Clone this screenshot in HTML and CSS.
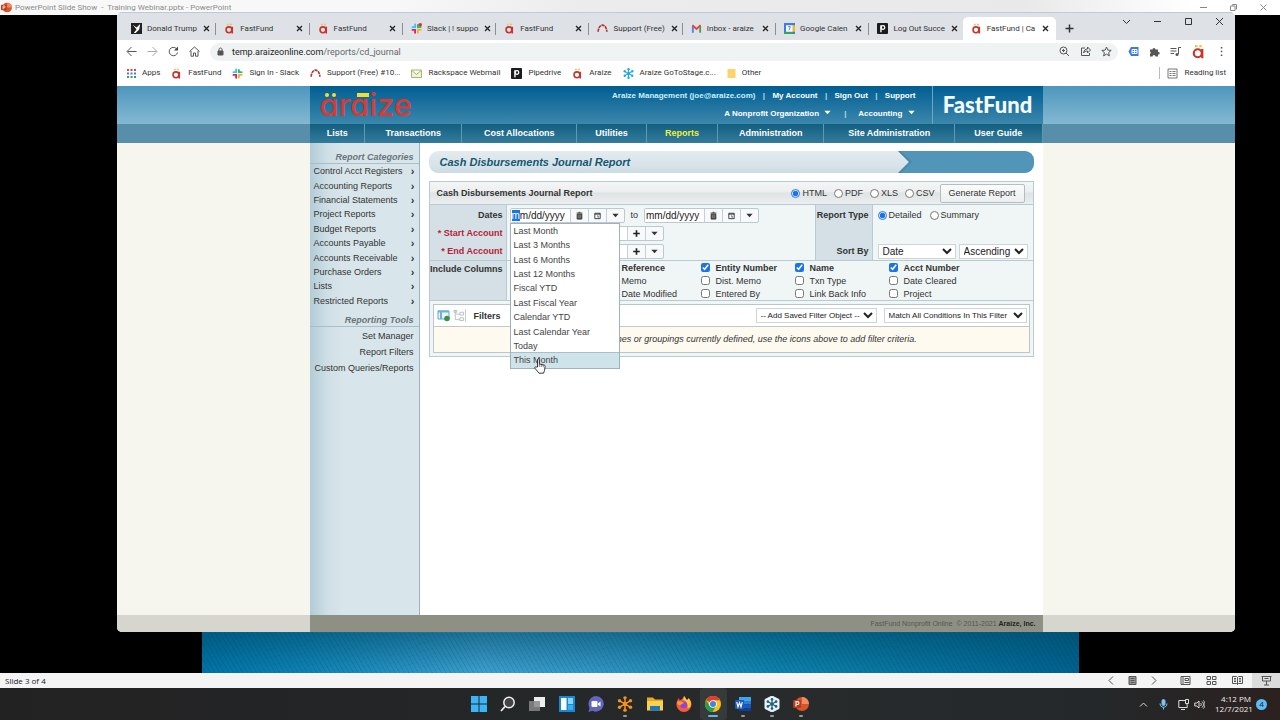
FILE: index.html
```html
<!DOCTYPE html>
<html lang="en">
<head>
<meta charset="utf-8">
<title>FastFund | Cash Disbursements Journal Report</title>
<link rel="stylesheet" href="styles.css">
</head>
<body>
<svg class="defs" aria-hidden="true">
  <symbol id="a-logo" viewBox="0 0 12 12"><circle cx="5.4" cy="7.4" r="3.2" fill="none" stroke="#c8332d" stroke-width="1.7"/><path d="M9 4v7.4" stroke="#c8332d" stroke-width="1.8"/><path d="M3.2 1.6h2M6.6 1.6h2" stroke="#f1c34d" stroke-width="1.8"/></symbol>
  <symbol id="slack" viewBox="0 0 12 12"><g fill="none" stroke-width="2" stroke-linecap="round"><path d="M4.5 1.6v3M1.6 4.5h1.6" stroke="#36c5f0"/><path d="M7.5 2v2.6M8.6 4.5h1.9" stroke="#2eb67d"/><path d="M7.5 7.5h3M7.5 9v1.4" stroke="#ecb22e"/><path d="M1.6 7.5h3M4.5 8.6v2" stroke="#e01e5a"/></g></symbol>
  <symbol id="arch" viewBox="0 0 12 12"><path d="M1.2 9.5C2 0 10 0 10.8 9.5" fill="none" stroke="#b8322f" stroke-width="1.8" stroke-dasharray="3.4 .7"/></symbol>
  <symbol id="pipe" viewBox="0 0 12 12"><rect width="12" height="12" rx="1" fill="#1b1c1e"/><circle cx="6.5" cy="4.8" r="2" fill="none" stroke="#fff" stroke-width="1.4"/><path d="M4.3 2.4v7.8" stroke="#fff" stroke-width="1.5"/></symbol>
  <symbol id="flake" viewBox="0 0 12 12"><g stroke="currentColor" fill="currentColor"><path d="M6 1v10M1.7 3.5l8.6 5M1.7 8.5l8.6-5" stroke-width="1.1"/><g stroke="none"><circle cx="6" cy="1.4" r="1.3"/><circle cx="6" cy="10.6" r="1.3"/><circle cx="1.9" cy="3.6" r="1.3"/><circle cx="10.1" cy="3.6" r="1.3"/><circle cx="1.9" cy="8.4" r="1.3"/><circle cx="10.1" cy="8.4" r="1.3"/><circle cx="6" cy="6" r="1.7"/></g></g></symbol>
  <symbol id="ppt" viewBox="0 0 16 16"><g stroke="none"><circle cx="9" cy="8" r="7" fill="#d9532c"/><path d="M9 1a7 7 0 0 1 7 7H9z" fill="#f08a63"/><rect y="4" width="8" height="8" rx="1" fill="#b93a19"/></g><path d="M3 10.500V5.600h1.500a1.400 1.400 0 0 1 0 2.900H3" fill="none" stroke="#fff" stroke-width="1.100"/></symbol>
  <symbol id="trash" viewBox="0 0 10 10"><path d="M2.400 3.500h5.200v5.500H2.400zM1.800 2.300h6.400M4 1.500h2" fill="#555" stroke="#333" stroke-width="1"/><path d="M4.200 4.500v3.500M5.800 4.500v3.500" stroke="#aaa" stroke-width=".5"/></symbol>
  <symbol id="cal" viewBox="0 0 10 10"><path d="M2 2.500h6v6H2zM2 3.500h6" fill="none" stroke="#333" stroke-width="1"/><path d="M4.500 5.500h1.200v2" fill="none" stroke="#333" stroke-width=".8"/></symbol>
  <symbol id="down" viewBox="0 0 10 10"><path d="M1.500 3h7L5 7z" fill="currentColor"/></symbol>
  <symbol id="plus" viewBox="0 0 10 10"><path d="M5 2v6M2 5h6" stroke="#222" stroke-width="1.500"/></symbol>
</svg>

<div class="desktop">
  <header class="ppt-title">
    <svg class="i11"><use href="#ppt"/></svg>
    <span>PowerPoint Slide Show &nbsp;-&nbsp; Training Webinar.pptx - PowerPoint</span>
    <div class="ppt-controls">
      <svg class="i9" viewBox="0 0 9 9"><path d="M1 4.500h7"/></svg>
      <svg class="i9" viewBox="0 0 9 9"><path d="M1.500 3h4.500v4.500h-4.500zM3.500 2.500v-1h4v4.500H6.500"/></svg>
      <svg class="i9" viewBox="0 0 9 9"><path d="M1.500 1.500l6 6M7.500 1.500l-6 6"/></svg>
    </div>
  </header>
  <div class="stage"><div class="slide"></div></div>
  <footer class="ppt-status">
    <span>Slide 3 of 4</span>
    <div class="views">
      <svg class="i11" viewBox="0 0 11 11"><path d="M7 1.500l-4 4 4 4"/></svg>
      <svg class="i11" viewBox="0 0 11 11"><path d="M2 1.500h7v8H2z" fill="#999"/><path d="M3.500 3.500h4M3.500 5.500h4M3.500 7.500h4"/></svg>
      <svg class="i11" viewBox="0 0 11 11"><path d="M4 1.500l4 4-4 4"/></svg>
      <svg class="i11 gap" viewBox="0 0 11 11"><path d="M1 1.500h9v8H1zM3 1.500v8M5 3.500h3.500v2H5zM4.500 7.500h5"/></svg>
      <svg class="i11" viewBox="0 0 11 11"><path d="M1 1.500h3.500v3H1zM6.500 1.500H10v3H6.500zM1 6.500h3.500v3H1zM6.500 6.500H10v3H6.500z"/></svg>
      <svg class="i11" viewBox="0 0 11 11"><path d="M.5 1.500h4l1 1 1-1h4v7h-4l-1 1-1-1h-4zM5.500 2.500v7M2 3.500h2M2 5h2M2 6.500h2M7 3.500h2M7 5h2M7 6.500h2"/></svg>
      <span class="current"><svg class="i11" viewBox="0 0 11 11"><path d="M.5 1.500h10M1.500 1.500v4.500h8v-4.500M5.500 6v4M3 10h5M3.500 3.500h4"/></svg></span>
    </div>
  </footer>
  <div class="taskbar">
    <nav class="apps" aria-label="Apps">
      <button aria-label="Start"><svg viewBox="0 0 16 16"><path d="M0 0h7.500v7.500H0zM8.500 0H16v7.500H8.500zM0 8.500h7.500V16H0zM8.500 8.500H16V16H8.500z" fill="#3bb5f5"/></svg></button>
      <button aria-label="Search"><svg viewBox="0 0 16 16"><circle cx="9" cy="6.500" r="5.200" fill="#444" stroke="#eee" stroke-width="1.500"/><path d="M5 10.500L1 15" stroke="#eee" stroke-width="1.800"/></svg></button>
      <button aria-label="Task view"><svg viewBox="0 0 16 16"><path d="M5 1h11v10H5z" fill="#eee"/><path d="M0 5h11v10H0z" fill="#888" opacity=".85"/></svg></button>
      <button aria-label="Widgets"><svg viewBox="0 0 16 16"><path d="M0 0h16v16H0z" fill="#1688d8"/><path d="M2 2h5.500v12H2z" fill="#fff"/><path d="M9 2h5v6H9z" fill="#8bd3fb"/><path d="M9 9h5v5H9z" fill="#3face9"/></svg></button>
      <button aria-label="Chat"><svg viewBox="0 0 16 16"><path d="M8 0a7.800 7.800 0 1 1-3.500 14.800L.5 16l1-4A8 8 0 0 1 8 0z" fill="#6664bd"/><rect x="3.500" y="5" width="6" height="6" rx="1" fill="#fff"/><path d="M10 7.500l2.500-2v5L10 8.800z" fill="#fff"/></svg></button>
      <button aria-label="GoTo" class="open orange"><svg><use href="#flake"/></svg></button>
      <button aria-label="File Explorer"><svg viewBox="0 0 16 16"><path d="M0 1.500h6l2 2h8V14H0z" fill="#e9a91f"/><path d="M0 5h16v9.500H0z" fill="#fcd04f"/><path d="M3 14.500V10h10v4.500H3z" fill="#1d79bd"/></svg></button>
      <button aria-label="Firefox"><svg viewBox="0 0 16 16"><path d="M8 0c2 2 1.500 3 3 4 1-.500 1.500-1.500 1.500-2 2 2 3 4 3 6.500A7.600 7.600 0 0 1 8 16 7.600 7.600 0 0 1 .4 8.500C.4 6 1.500 3.500 3 2l.5 2.500C5.500 4 7.500 2 8 0z" fill="#f9583a"/><path d="M8 0c2 2 1.500 3 3 4 1-.500 1.500-1.500 1.500-2 2 2 3 5 2 8-1 2-2 2-3 2 1-4-1-7-4.500-8C7.500 3 8 1 8 0z" fill="#fec939"/><circle cx="7.500" cy="8.800" r="3.500" fill="#8c45e0"/><path d="M1 6c3-2 5 0 7 .5-1 2-3 1-3.500 3C2 9 1 8 1 6z" fill="#ff9a2e"/></svg></button>
      <button aria-label="Chrome" class="open active"><svg viewBox="0 0 16 16"><circle cx="8" cy="8" r="8" fill="#fbc116"/><path d="M8 8L1.100 4A8 8 0 0 1 15 4.200H8z" fill="#e33b2e"/><path d="M1.100 4A8 8 0 0 0 7.500 16L11 10 8 8 4.500 9.800z" fill="#2a9d4a"/><circle cx="8" cy="8" r="3.800" fill="#fff"/><circle cx="8" cy="8" r="3" fill="#3f82ee"/></svg></button>
      <button aria-label="Word" class="open"><svg viewBox="0 0 16 16"><path d="M4 1h12v4H4z" fill="#41a5ee"/><path d="M4 5h12v3.500H4z" fill="#2b7cd3"/><path d="M4 8.500h12V12H4z" fill="#185abd"/><path d="M4 12h12v3H4z" fill="#103f91"/><rect y="4" width="9" height="9" rx="1" fill="#185abd"/><path d="M1.700 6l1.300 5 1.500-4.500L6 11l1.300-5" fill="none" stroke="#fff" stroke-width="1.100"/></svg></button>
      <button aria-label="GoToStage" class="open hex"><svg viewBox="0 0 16 16"><path d="M8 0l7 3.500v9L8 16l-7-3.500v-9z" fill="#e7f4fa" stroke="#e7f4fa"/><use href="#flake" x="2" y="2" width="12" height="12"/></svg></button>
      <button aria-label="PowerPoint" class="open"><svg><use href="#ppt"/></svg></button>
    </nav>
    <div class="tray">
      <svg class="i11" viewBox="0 0 11 11"><path d="M2 7.500L5.500 4 9 7.500"/></svg>
      <svg class="i11 mic" viewBox="0 0 11 11"><rect x="4" y=".5" width="3" height="6" rx="1.500" fill="#7fc4ee"/><path d="M2 4.500c0 5 7 5 7 0M5.500 8.500v2"/></svg>
      <svg class="i11" viewBox="0 0 11 11"><path d="M7 1.500H.8v7h8.400V6M3 10.500h4M7.500.5h3v4h-3zM9 4.500v1.500"/></svg>
      <svg class="i11 near" viewBox="0 0 11 11"><path d="M.8 4h2L5 2v7L2.800 7h-2zM6.500 4c1 1 1 2 0 3M8 2.500c2 2 2 4 0 6M9.500 1.500c2 2.500 2 5.500 0 8"/></svg>
      <div class="clock"><div>4:12 PM</div><div>12/7/2021</div></div>
      <span class="badge">4</span>
    </div>
  </div>

  <section class="browser">
    <div class="tabstrip">
      <div class="tabs" role="tablist">
        <div class="tab"><svg class="i11" viewBox="0 0 12 12"><path d="M0 0h12v12H0z" fill="#222"/><path d="M2 2l4 3 4-4-1 6-4 4H3l3-4z" fill="#fff"/></svg><span>Donald Trump</span><button aria-label="Close"><svg class="i9"><use href="#x"/></svg></button></div>
        <div class="tab"><svg class="i11"><use href="#a-logo"/></svg><span>FastFund</span><button aria-label="Close"><svg class="i9"><use href="#x"/></svg></button></div>
        <div class="tab"><svg class="i11"><use href="#a-logo"/></svg><span>FastFund</span><button aria-label="Close"><svg class="i9"><use href="#x"/></svg></button></div>
        <div class="tab"><svg class="i11" viewBox="0 0 12 12"><use href="#slack" width="12" height="12"/><circle cx="10" cy="2" r="2" fill="#d8322a"/></svg><span>Slack | ! suppo</span><button aria-label="Close"><svg class="i9"><use href="#x"/></svg></button></div>
        <div class="tab"><svg class="i11"><use href="#a-logo"/></svg><span>FastFund</span><button aria-label="Close"><svg class="i9"><use href="#x"/></svg></button></div>
        <div class="tab"><svg class="i11"><use href="#arch"/></svg><span>Support (Free)</span><button aria-label="Close"><svg class="i9"><use href="#x"/></svg></button></div>
        <div class="tab"><svg class="i11" viewBox="0 0 12 12"><g fill="none" stroke-width="2"><path d="M2 10.500V3" stroke="#4285f4"/><path d="M10 10.500V3" stroke="#34a853"/><path d="M1.500 2.500L6 6.500l4.500-4" stroke="#ea4335"/></g></svg><span>Inbox - araize</span><button aria-label="Close"><svg class="i9"><use href="#x"/></svg></button></div>
        <div class="tab"><svg class="i11" viewBox="0 0 12 12"><path d="M0 0h12v12H0z" fill="#3d7de8"/><path d="M9.500 2.500H12V9.500H9.500z" fill="#fbbc04"/><path d="M0 9.500h9.500V12H0z" fill="#34a853"/><path d="M2.200 2.500h7.300v7H2.200z" fill="#fff"/><path d="M4.500 4h2.500L5.500 8" fill="none" stroke="#3d7de8"/></svg><span>Google Calen</span><button aria-label="Close"><svg class="i9"><use href="#x"/></svg></button></div>
        <div class="tab"><svg class="i11"><use href="#pipe"/></svg><span>Log Out Succe</span><button aria-label="Close"><svg class="i9"><use href="#x"/></svg></button></div>
        <div class="tab selected"><svg class="i11"><use href="#a-logo"/></svg><span>FastFund | Ca</span><button aria-label="Close"><svg class="i9"><use href="#x"/></svg></button></div>
      </div>
      <button class="new-tab" aria-label="New tab"><svg class="i11" viewBox="0 0 11 11"><path d="M5.500 1.500v8M1.500 5.500h8"/></svg></button>
      <div class="win-controls">
        <svg class="i11" viewBox="0 0 11 11"><path d="M2 4l3.500 3.500L9 4"/></svg>
        <svg class="i11" viewBox="0 0 11 11"><path d="M2 5.500h7"/></svg>
        <svg class="i11" viewBox="0 0 11 11"><path d="M2.500 2.500h6v6h-6z"/></svg>
        <svg class="i11" viewBox="0 0 11 11"><path d="M2 2l7 7M9 2L2 9"/></svg>
      </div>
    </div>

    <div class="toolbar">
      <svg class="i11" viewBox="0 0 11 11"><path d="M10.500 5.500H1.500M5.500 1L1 5.500 5.500 10"/></svg>
      <svg class="i11 dim" viewBox="0 0 11 11"><path d="M.5 5.500h9M5.500 1L10 5.500 5.500 10"/></svg>
      <svg class="i11" viewBox="0 0 11 11"><path d="M9.500 6.500A4.200 4.200 0 1 1 8.300 2.500"/><path d="M10 .5v4H6z" fill="#444" stroke="none"/></svg>
      <svg class="i11" viewBox="0 0 11 11"><path d="M.5 5.500l5-4.500 5 4.500M2 5v5.200h2.500V7h2v3.200H9V5"/></svg>
      <div class="omnibox">
        <svg class="i9" viewBox="0 0 9 9"><path d="M2 4h5v4H2z" fill="#555"/><path d="M3 4V2.500C3 .500 6 .500 6 2.500V4"/></svg>
        <span class="url">temp.araizeonline.com<span>/reports/cd_journal</span></span>
        <svg class="i11" viewBox="0 0 11 11"><circle cx="4.500" cy="4.500" r="3.500"/><path d="M7 7l3 3M3 4.500h3M4.500 3v3"/></svg>
        <svg class="i11" viewBox="0 0 11 11"><path d="M5 2H1.500v7.500h8V7M3.500 7c.500-3 2-4 4-4V1l3 3-3 3V5c-2 0-3 .500-4 2z"/></svg>
        <svg class="i11" viewBox="0 0 11 11"><path d="M5.500 1l1.300 3.100 3.400.3-2.600 2.200.8 3.300-2.900-1.800-2.900 1.800.8-3.300L.8 4.400l3.400-.3z"/></svg>
      </div>
      <svg class="i11" viewBox="0 0 11 11"><path d="M3 1h7.500v9H3L.5 5.500z" fill="#3b78e7" stroke="none"/><path d="M4 3.500h5v4H4zM4 5.500h5M6.500 3.500v4" stroke="#fff"/></svg>
      <svg class="i11" viewBox="0 0 11 11"><path d="M1 3.500h2.500a1.500 1.500 0 1 1 3 0h2.500V6a1.300 1.300 0 1 1 0 2.500v2H6.500a1.400 1.400 0 0 0-3 0H1V8a1.500 1.500 0 0 0 0-2.500z" fill="#555" stroke="none"/></svg>
      <svg class="i11" viewBox="0 0 11 11"><path d="M.5 2.500h6M.5 5h6M.5 7.500h3.500M8.500 8V1.500h2.500"/><circle cx="7" cy="8.500" r="1.500" fill="#555" stroke="none"/></svg>
      <svg class="i15"><use href="#a-logo"/></svg>
      <svg class="i11" viewBox="0 0 11 11"><path d="M4.800 1h1.500v1.500H4.800zM4.800 4.800h1.500v1.500H4.800zM4.800 8.500h1.500V10H4.800z" fill="#555" stroke="none"/></svg>
    </div>

    <div class="bookmarks">
      <a href="#"><svg class="i9" viewBox="0 0 9 9"><path d="M0 1h9" stroke="#df4637" stroke-width="2" stroke-dasharray="2 1.500"/><path d="M0 4.500h9" stroke="#3d7de8" stroke-width="2" stroke-dasharray="2 1.500"/><path d="M0 8h9" stroke="#42995a" stroke-width="2" stroke-dasharray="2 1.500"/></svg>Apps</a>
      <a href="#"><svg class="i11"><use href="#a-logo"/></svg>FastFund</a>
      <a href="#"><svg class="i11"><use href="#slack"/></svg>Sign In - Slack</a>
      <a href="#"><svg class="i11"><use href="#arch"/></svg>Support (Free) #10...</a>
      <a href="#"><svg class="i11" viewBox="0 0 11 11"><path d="M.5 2h10v7.500H.5zM1 2.500L5.500 6.500 10 2.500" fill="#eef3dc" stroke="#a9b56b"/></svg>Rackspace Webmail</a>
      <a href="#"><svg class="i11"><use href="#pipe"/></svg>Pipedrive</a>
      <a href="#"><svg class="i11"><use href="#a-logo"/></svg>Araize</a>
      <a href="#"><svg class="i11 sky"><use href="#flake"/></svg>Araize GoToStage.c...</a>
      <a href="#"><svg class="i9" viewBox="0 0 9 9"><path d="M.5 0h8v9h-8z" fill="#fbd46d"/></svg>Other</a>
      <a href="#" class="reading"><svg class="i11" viewBox="0 0 11 11"><path d="M1 1h9v9H1zM2.500 3.500h2M2.500 5.500h2M2.500 7.500h2M5.500 3.500h3M5.500 5.500h3M5.500 7.500h3"/></svg>Reading list</a>
    </div>

    <div class="page">
      <div class="site">
        <header class="site-head">
          <div class="brand"><span class="brand-name">araize</span><i class="dot d1"></i><i class="dot d2"></i><i class="bar"></i></div>
          <div class="account">
            <div class="links"><span class="who">Araize Management (joe@araize.com)</span><a href="#">My Account</a><a href="#">Sign Out</a><a href="#">Support</a></div>
            <div class="links wide"><a href="#">A Nonprofit Organization <svg class="i9"><use href="#down"/></svg></a><a href="#">Accounting <svg class="i9"><use href="#down"/></svg></a></div>
          </div>
          <div class="product">FastFund</div>
        </header>
        <nav class="menu">
          <a href="#">Lists</a><a href="#">Transactions</a><a href="#">Cost Allocations</a><a href="#">Utilities</a><a href="#" class="on">Reports</a><a href="#">Administration</a><a href="#">Site Administration</a><a href="#">User Guide</a>
        </nav>
        <div class="columns">
          <aside>
            <h2>Report Categories</h2>
            <nav class="cats">
              <a href="#">Control Acct Registers</a><a href="#">Accounting Reports</a><a href="#">Financial Statements</a><a href="#">Project Reports</a><a href="#">Budget Reports</a><a href="#">Accounts Payable</a><a href="#">Accounts Receivable</a><a href="#">Purchase Orders</a><a href="#">Lists</a><a href="#">Restricted Reports</a>
            </nav>
            <h2>Reporting Tools</h2>
            <nav class="tools"><a href="#">Set Manager</a><a href="#">Report Filters</a><a href="#">Custom Queries/Reports</a></nav>
          </aside>
          <main>
            <div class="title"><h1>Cash Disbursements Journal Report</h1><svg viewBox="0 0 136 22" preserveAspectRatio="none"><path d="M0 0h136v22H0l11-11z" fill="#5195b8"/><path d="M0 0h3l11 11L3 22H0l11-11z" fill="#417f9d" opacity=".5"/></svg></div>
            <form class="panel">
              <div class="panel-head">
                <strong>Cash Disbursements Journal Report</strong>
                <label><input type="radio" name="fmt" checked>HTML</label>
                <label><input type="radio" name="fmt">PDF</label>
                <label><input type="radio" name="fmt">XLS</label>
                <label><input type="radio" name="fmt">CSV</label>
                <button type="button" class="generate">Generate Report</button>
              </div>
              <div class="options">
                <div class="names"><label for="from">Dates</label><label for="start" class="req">* Start Account</label><label for="end" class="req">* End Account</label></div>
                <div class="fields">
                  <div class="line">
                    <div class="group"><input id="from" class="date" value="mm/dd/yyyy"><button type="button" aria-label="Clear"><svg class="i9"><use href="#trash"/></svg></button><button type="button" aria-label="Calendar"><svg class="i9"><use href="#cal"/></svg></button><button type="button" aria-label="Ranges"><svg class="i9"><use href="#down"/></svg></button>
                      <ul class="ranges"><li>Last Month</li><li>Last 3 Months</li><li>Last 6 Months</li><li>Last 12 Months</li><li>Fiscal YTD</li><li>Last Fiscal Year</li><li>Calendar YTD</li><li>Last Calendar Year</li><li>Today</li><li class="hover">This Month</li></ul>
                    </div>
                    <label for="to">to</label>
                    <div class="group"><input id="to" class="date" value="mm/dd/yyyy"><button type="button" aria-label="Clear"><svg class="i9"><use href="#trash"/></svg></button><button type="button" aria-label="Calendar"><svg class="i9"><use href="#cal"/></svg></button><button type="button" aria-label="Ranges"><svg class="i9"><use href="#down"/></svg></button></div>
                  </div>
                  <div class="line"><div class="group"><input id="start" class="acct"><button type="button" aria-label="Add"><svg class="i11"><use href="#plus"/></svg></button><button type="button" aria-label="More"><svg class="i9"><use href="#down"/></svg></button></div></div>
                  <div class="line"><div class="group"><input id="end" class="acct"><button type="button" aria-label="Add"><svg class="i11"><use href="#plus"/></svg></button><button type="button" aria-label="More"><svg class="i9"><use href="#down"/></svg></button></div></div>
                </div>
                <div class="names second"><span>Report Type</span><label for="sort">Sort By</label></div>
                <div class="fields second">
                  <div class="radios"><label><input type="radio" name="kind" checked>Detailed</label><label><input type="radio" name="kind">Summary</label></div>
                  <div class="sorts"><select id="sort"><option>Date</option></select><select aria-label="Direction"><option>Ascending</option></select></div>
                </div>
              </div>
              <div class="include">
                <div class="names"><span>Include Columns</span></div>
                <div class="checks">
                  <label class="bold c2"><input type="checkbox" checked>Reference</label><label class="bold"><input type="checkbox" checked>Entity Number</label><label class="bold"><input type="checkbox" checked>Name</label><label class="bold"><input type="checkbox" checked>Acct Number</label>
                  <label class="c2"><input type="checkbox">Memo</label><label><input type="checkbox">Dist. Memo</label><label><input type="checkbox">Txn Type</label><label><input type="checkbox">Date Cleared</label>
                  <label class="c2"><input type="checkbox">Date Modified</label><label><input type="checkbox">Entered By</label><label><input type="checkbox">Link Back Info</label><label><input type="checkbox">Project</label>
                </div>
              </div>
              <div class="filter">
                <div class="filter-head">
                  <svg class="i13" viewBox="0 0 13 13"><path d="M1 2h11v8H1z" fill="#eaf5fa" stroke="#6ea3bd"/><path d="M1 2.500h11M4 2v8" stroke="#6ab3d6" stroke-width="2"/><circle cx="10" cy="9.500" r="2.800" fill="#38934a"/></svg>
                  <svg class="i13 tree" viewBox="0 0 13 13"><path d="M2.500 1v10h5M2.500 5h5M7.500 3h4v3h-4zM7.500 9h4v3h-4zM1 1h3v2H1z" fill="none" stroke="#b5bec2"/></svg>
                  <strong>Filters</strong>
                  <select aria-label="Saved filter" class="saved"><option>-- Add Saved Filter Object --</option></select>
                  <select aria-label="Match" class="match"><option>Match All Conditions In This Filter</option></select>
                </div>
                <p>There are no filter lines or groupings currently defined, use the icons above to add filter criteria.</p>
              </div>
            </form>
          </main>
        </div>
      </div>
      <footer class="site-foot"><div>FastFund Nonprofit Online &nbsp;© 2011-2021 <b>Araize, Inc.</b></div></footer>
    </div>
  </section>
  <svg class="cursor" viewBox="0 0 12 16"><path d="M3.500 9V1.800c0-1.300 1.800-1.300 1.800 0V6l4.400.9c1 .2 1.500.8 1.400 1.700l-.6 4-1 2.600H5L1 10.300c-.800-1 .500-1.900 1.300-1.200z" fill="#fff" stroke="#222" stroke-width=".9"/><path d="M5.300 6v3M7.300 6.500v2.500M9.200 7v2.200" stroke="#222" stroke-width=".6"/></svg>
</div>
<svg class="defs" aria-hidden="true"><symbol id="x" viewBox="0 0 9 9"><path d="M2 2l5 5M7 2L2 7" stroke="#222" stroke-width="1.300"/></symbol></svg>
<script src="app.js"></script>
</body>
</html>
```
FILE: app.js
```js
const from = document.getElementById('from');
from.focus();
from.setSelectionRange(0, 1);
```
FILE: styles.css
```css
* { box-sizing: border-box; }
body { margin: 0; font: 9px/12px "Liberation Sans", Arial, sans-serif; color: #222; }
a { color: inherit; text-decoration: none; }
button { font: inherit; padding: 0; border: 0; background: none; color: inherit; }
input, select { font: inherit; margin: 0; color: #222; }
h1, h2, p, ul { margin: 0; padding: 0; }
svg { flex: none; fill: none; }
.defs { position: absolute; width: 0; height: 0; }
.i9 { width: 9px; height: 9px; }
.i11 { width: 11px; height: 11px; }
.i13 { width: 13px; height: 13px; }
.i15 { width: 15px; height: 15px; }

.desktop { position: relative; height: 100vh; overflow: hidden; display: flex; flex-direction: column; background: #000; }
.ppt-title { height: 15px; flex: none; display: flex; align-items: center; gap: 3px; padding: 0 12px 0 1px; background: linear-gradient(90deg, #f8f8f8 30%, #ececec 45%, #e9e9e9 80%, #fff 93%); font: 8px/12px Roboto, sans-serif; color: #8c8c8c; }
.ppt-controls { margin-left: auto; display: flex; gap: 21px; stroke: #888; }
.stage { flex: 1; display: flex; justify-content: center; }
.slide { width: 877px; background: repeating-linear-gradient(60deg, transparent 0 3px, rgba(0, 40, 80, .12) 3px 4px), linear-gradient(180deg, transparent 93%, rgba(0, 70, 95, .5) 94%, transparent 100%), linear-gradient(90deg, #0073a6, #0e83b5 12%, #3c9fce 32%, #3296c5 45%, #0d83ae 65%, #00628f); }
.ppt-status { height: 15px; flex: none; display: flex; align-items: center; justify-content: space-between; padding-left: 5px; background: #f3f4f3; font: 8px/12px "Open Sans", sans-serif; }
.views { display: flex; align-items: center; gap: 10px; stroke: #555; }
.views .gap { margin-left: 11px; }
.views .gap, .views .gap ~ svg { margin-right: 5px; }
.current { height: 15px; width: 28px; margin-left: -6px; display: flex; align-items: center; justify-content: center; background: #dcdcdc; }
.taskbar { height: 32px; flex: none; display: flex; justify-content: center; position: relative; background: linear-gradient(90deg, #232223, #232526 30%, #272b2c 60%, #24282a 85%, #2b211f); color: #eee; }
.apps { width: 352px; display: flex; }
.apps button { flex: 1; display: flex; flex-direction: column; align-items: center; padding-top: 8px; margin: 0 1px; }
.apps svg { width: 16px; height: 16px; }
.apps .open::after { content: ""; width: 4px; height: 2px; margin-top: 3px; border-radius: 1px; background: #999; }
.apps .active { background: #363a3b; border-radius: 3px; }
.apps .active::after { width: 10px; background: #62b6ea; }
.orange { color: #f6921e; }
.hex { color: #215e80; }
.sky { color: #25a8e0; }
.tray { position: absolute; right: 13px; top: 0; height: 32px; display: flex; align-items: center; gap: 9px; stroke: #ddd; font: 8px/10px "Open Sans", sans-serif; }
.tray .mic { stroke: #7fc4ee; }
.tray .near { margin-left: -4px; margin-right: 1px; }
.clock { text-align: right; width: 36px; white-space: nowrap; }
.badge { width: 11px; height: 11px; margin-left: -4px; border-radius: 50%; background: #5cbbf5; color: #123; text-align: center; }

.browser { position: absolute; left: 117px; right: 45px; top: 12px; bottom: 88px; display: flex; flex-direction: column; border-radius: 5px; overflow: hidden; background: #fff; font: 8px/12px Roboto, sans-serif; color: #333; }
.browser > div { flex: none; }
.tabstrip { height: 28px; display: flex; background: #dee1e6; padding-left: 6px; border-top: 1px solid #c5c8cc; }
.tabs { flex: 0 1 933px; display: flex; padding-top: 4px; min-width: 0; }
.tab { flex: 1 1 0; min-width: 0; display: flex; align-items: center; gap: 5px; padding: 0 6px 0 8px; position: relative; }
.tab:not(.selected)::after { content: ""; position: absolute; right: 0; top: 6px; height: 12px; width: 1px; background: #8b8e92; }
.tab:nth-child(9)::after { display: none; }
.tab span { flex: 1; white-space: nowrap; }
.tab button { display: flex; }
.tab.selected { background: #fff; border-radius: 5px 5px 0 0; }
.new-tab { width: 27px; display: flex; align-items: center; justify-content: center; padding-top: 4px; stroke: #333; stroke-width: 1.5px; }
.win-controls { margin-left: auto; display: flex; gap: 20px; padding: 3px 10px 0 0; stroke: #333; }
.toolbar { height: 23px; display: flex; align-items: center; gap: 10px; padding: 0 8px 0 9px; stroke: #555; }
.toolbar .dim { stroke: #aaa; }
.omnibox { flex: 1; height: 18px; display: flex; align-items: center; gap: 10px; padding: 0 6px; border-radius: 9px; background: #f0f3f4; }
.url { flex: 1; margin-left: -3px; font-size: 9px; color: #222; }
.url span { color: #666; }
.bookmarks { height: 23px; display: flex; align-items: center; gap: 11px; padding: 0 9px 3px 10px; }
.bookmarks a { display: flex; align-items: center; gap: 6px; white-space: nowrap; }
.bookmarks .reading { margin-left: auto; stroke: #555; border-left: 1px solid #bbb; padding-left: 7px; }
.reading svg { stroke-width: .8px; }

.browser > .page { flex: 1; min-height: 0; display: flex; flex-direction: column; background: linear-gradient(180deg, #4d97bd, #84b8d3 38px, #578fab 38px 57px, #f6f6ee 57px); font: 9px/12px "Liberation Sans", Arial, sans-serif; color: #333; }
.site { flex: 1; width: 100%; max-width: 733px; margin: 0 auto; display: flex; flex-direction: column; }
.site-head { height: 38px; display: flex; background: linear-gradient(180deg, #005e92, #3c87ac); color: #fff; font-weight: bold; font-size: 8px; }
.brand { position: relative; padding: 2px 0 0 10px; flex: 1; }
.brand-name { font: 500 31px/34px Inter, sans-serif; font-feature-settings: "cv11"; color: #d63b36; }
.dot, .bar { position: absolute; top: 7px; height: 4px; width: 4px; border-radius: 50%; background: #f2de32; }
.d1 { left: 15px; }
.d2 { left: 22px; }
.bar { left: 47px; width: 12px; border-radius: 0; }
.account { display: flex; flex-direction: column; gap: 6px; padding: 4px 16px 0 0; align-items: flex-end; }
.links { display: flex; }
.links > * + *::before { content: "|"; display: inline-block; width: 17px; text-align: center; color: #b8d8e6; }
.links.wide > * + *::before { width: 26px; }
.links svg { vertical-align: -1px; margin-left: 2px; color: #fff; }
.who { color: #c8f0fa; }
.product { width: 111px; border-left: 1px solid #6ba7c4; text-align: center; font: 900 22px/37px Lato, sans-serif; color: #f4fcff; }
.menu { height: 19px; display: flex; padding-left: 1px; background: linear-gradient(180deg, #135f80, #337b9c); color: #fff; font-weight: bold; line-height: 19px; text-align: center; }
.menu a { flex: 97 1 0; border-right: 1px solid #5e9ab4; }
.menu a:nth-child(1) { flex-grow: 54; }
.menu a:nth-child(3) { flex-grow: 115; }
.menu a:nth-child(4) { flex-grow: 69; }
.menu a:nth-child(5) { flex-grow: 71; }
.menu a:nth-child(6) { flex-grow: 106; }
.menu a:nth-child(7) { flex-grow: 131; }
.menu a:nth-child(8) { flex-grow: 87; }
.menu .on { color: #eef03a; }
.columns { flex: 1; display: flex; background: #fff; }
aside { width: 110px; padding: 9px 0 0; border-right: 1px solid #9ab5c0; background: linear-gradient(90deg, #b2ccd7, #cfdfe6 16%, #d8e5ea 30%); }
aside h2 { font: italic bold 9px/11px "Liberation Sans", sans-serif; color: #6a7478; text-align: right; padding-right: 5px; border-bottom: 1px solid #a9bfc8; }
.cats { display: flex; flex-direction: column; height: 151px; padding: 0 4px 7px; }
.cats a { flex: 1; display: flex; align-items: center; justify-content: space-between; white-space: nowrap; }
.cats a::after { content: "›"; font: bold 11px/10px "Liberation Sans", sans-serif; }
.tools { display: flex; flex-direction: column; align-items: flex-end; gap: 4px; padding: 3px 5px; white-space: nowrap; }
main { flex: 1; min-width: 0; padding: 8px 9px 0; }
.title { height: 22px; display: flex; align-items: center; justify-content: space-between; overflow: hidden; padding-left: 11px; border-radius: 9px; background: linear-gradient(180deg, #e3ebee, #d6e3e9 70%, #cbdbe2); }
.title h1 { font: italic bold 11px/22px "Liberation Sans", sans-serif; color: #175672; }
.title svg { width: 136px; height: 22px; }
.panel { margin-top: 8px; padding-bottom: 3px; border: 1px solid #b9cbd2; background: #f0f5f6; }
.panel-head { height: 23px; display: flex; align-items: center; gap: 7px; padding: 0 8px 0 7px; background: linear-gradient(180deg, #f4f6f6, #eceeef 45%, #dfe3e4 50%, #eceeef); border-bottom: 1px solid #b9cbd2; }
.panel-head strong { margin-right: auto; }
label { display: flex; align-items: center; white-space: nowrap; }
input[type=radio], input[type=checkbox] { width: 9px; height: 9px; margin: 0; flex: none; accent-color: #1a73e8; }
.panel-head label, .radios label { gap: 2px; }
.generate { margin-left: -2px; height: 19px; width: 85px; border: 1px solid #b4bec2; border-radius: 2px; background: linear-gradient(180deg, #fbfbfb, #eceff0); }
.options { display: flex; border-bottom: 1px solid #b9cbd2; }
.names { width: 77px; flex: none; display: flex; flex-direction: column; align-items: flex-end; padding: 1px 3px 0; background: #d4e0e5; border-right: 1px solid #b9cbd2; font-weight: bold; line-height: 18px; white-space: nowrap; }
.req { color: #b3243a; }
.fields { flex: 1; padding: 1px 0 0 3px; }
.line { height: 18px; display: flex; align-items: center; gap: 6px; }
.group { position: relative; display: flex; height: 15px; border: 1px solid #bccace; border-radius: 2px; background: #f7f9fa; }
.group button { width: 18px; display: flex; align-items: center; justify-content: center; border-left: 1px solid #c4d0d5; }
.group input { border: 0; outline: 0; padding: 0 1px; background: #fff; height: 13px; }
.date { width: 59px; font-size: 10px; }
.acct { width: 116px; }
.date::selection { background: #1a73e8; color: #fff; }
.names.second { width: 58px; justify-content: space-between; padding-left: 0; border-left: 1px solid #b9cbd2; }
.fields.second { flex: 0 0 160px; display: flex; flex-direction: column; justify-content: space-between; padding: 4px 5px 1px; }
.radios { display: flex; gap: 8px; }
.sorts { display: flex; gap: 3px; }
select { border: 1px solid #ccd5d8; background: #fff; height: 15px; padding: 0; }
.sorts select { height: 15px; font-size: 10px; width: 78px; }
.sorts select + select { width: 69px; }
.include { display: flex; border-bottom: 1px solid #b9cbd2; height: 40px; }
.include .names { line-height: 16px; padding-top: 0; }
.checks { display: grid; grid-template-columns: repeat(5, 94px); grid-auto-rows: 13px; padding: 0 0 0 6px; width: 476px; }
.checks label { gap: 6px; }
.checks .c2 { grid-column-start: 2; }
.bold { font-weight: bold; }
.filter { margin: 3px 3px 0; border: 1px solid #bcc5c8; background: #fff; }
.filter-head { height: 22px; display: flex; align-items: center; gap: 3px; padding: 0 2px 0 3px; border-bottom: 1px solid #c5c9c6; }
.tree { border-right: 1px solid #ccc; }
.filter-head strong { flex: 1; padding-left: 5px; }
.filter-head select { font-size: 8px; }
.saved { width: 121px; }
.match { width: 143px; margin-left: 4px; }
.filter p { font-style: italic; line-height: 25px; text-align: center; padding-right: 6px; background: #fefaf0; color: #333; }
.ranges { position: absolute; z-index: 2; left: -1px; top: 14px; width: 110px; height: 146px; display: flex; flex-direction: column; list-style: none; border: 1px solid #9fb2ba; background: #fff; color: #444; }
.ranges li { flex: 1; display: flex; align-items: center; padding-left: 3px; white-space: nowrap; }
.ranges .hover { background: #cfe3ea; box-shadow: 0 -1px #a9c0c9; }
.site-foot { height: 17px; background: #d6d6cf; }
.site-foot div { max-width: 733px; height: 17px; margin: 0 auto; padding-right: 7px; background: #8f9084; font-size: 7px; line-height: 18px; text-align: right; color: #555; }
.site-foot b { color: #222; }
.cursor { position: absolute; z-index: 3; left: 534px; top: 358px; width: 12px; height: 16px; }
```
